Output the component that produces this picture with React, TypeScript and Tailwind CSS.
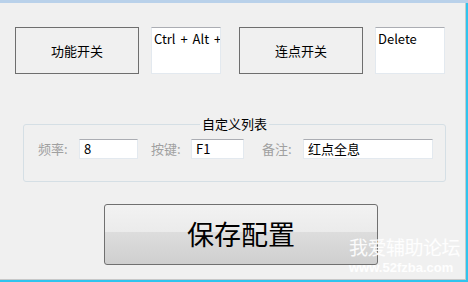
import React from "react";

const font = "font-['Noto_Sans_CJK_SC','Noto_Sans',sans-serif]";

const FlatButton: React.FC<{ label: string }> = ({ label }) => (
  <button className="w-[124px] h-[47px] border border-[#6e6e6e] bg-[#f0f0f0] text-[13px] text-black flex items-center justify-center">
    {label}
  </button>
);

const KeyBox: React.FC<{ value: string }> = ({ value }) => (
  <div className="w-[70px] h-[47px] bg-white border border-[#e3e9ef] border-t-[#abadb3] overflow-hidden whitespace-nowrap pl-[2px] pt-[2px] text-[13px] leading-[17px] [word-spacing:2px] text-black">
    {value}
  </div>
);

const Field: React.FC<{ label: string; value: string; width: string; labelWidth: string; ml: string }> = ({
  label,
  value,
  width,
  labelWidth,
  ml,
}) => (
  <div className={`flex items-center ${ml}`}>
    <span className={`${labelWidth} text-[13px] text-[#a0a0a0]`}>{label}</span>
    <div
      className={`${width} h-[20px] bg-white border border-[#e3e9ef] border-t-[#abadb3] px-[4px] text-[13px] leading-[18px] text-black whitespace-nowrap overflow-hidden`}
    >
      {value}
    </div>
  </div>
);

const App: React.FC = () => {
  return (
    <div className={`relative w-[468px] h-[282px] bg-[#f0f0f0] flex flex-col overflow-hidden ${font}`}>
      {/* window frame top */}
      <div className="h-[3px] bg-[#b9d1ea] shrink-0" />

      <div className="flex-1 flex flex-col border-r-2 border-b-2 border-[#2fc4ee]">
        <div className="flex-1 flex flex-col border-r border-b border-[#c8c8c8]">
          {/* hotkey row */}
          <div className="flex items-start pt-[24px] pl-[15px]">
            <FlatButton label="功能开关" />
            <div className="ml-[12px]">
              <KeyBox value="Ctrl + Alt + F1" />
            </div>
            <div className="ml-[18px]">
              <FlatButton label="连点开关" />
            </div>
            <div className="ml-[12px]">
              <KeyBox value="Delete" />
            </div>
          </div>

          {/* custom list group */}
          <fieldset className="ml-[23px] mt-[41px] w-[423px] h-[67px] border border-[#d5dfe5] rounded-[3px] px-0 pt-0">
            <legend className="mx-auto px-[2px] text-[13px] leading-[18px] text-black">自定义列表</legend>
            <div className="flex items-center pl-[14px] mt-[6px]">
              <Field label="频率:" value="8" width="w-[59px]" labelWidth="w-[41px]" ml="" />
              <Field label="按键:" value="F1" width="w-[53px]" labelWidth="w-[40px]" ml="ml-[13px]" />
              <Field label="备注:" value="红点全息" width="w-[130px]" labelWidth="w-[41px]" ml="ml-[18px]" />
            </div>
          </fieldset>

          {/* save */}
          <div className="pl-[104px] mt-[22px]">
            <button className="w-[274px] h-[61px] border border-[#707070] rounded-[3px] bg-[linear-gradient(#f2f2f2,#ebebeb_46%,#dddddd_46%,#cfcfcf)] text-[27px] text-black flex items-center justify-center">
              保存配置
            </button>
          </div>
        </div>
      </div>

      {/* forum watermark */}
      <div className="absolute left-[349px] top-[236px] flex flex-col items-start pointer-events-none">
        <span className="text-[19px] leading-[22px] text-white/90 tracking-[-0.5px]">我爱辅助论坛</span>
        <span className="mt-[3px] text-[13px] leading-[13px] font-bold text-white/90 font-['Liberation_Sans',sans-serif]">
          www.52fzba.com
        </span>
      </div>
    </div>
  );
};

export default App;
